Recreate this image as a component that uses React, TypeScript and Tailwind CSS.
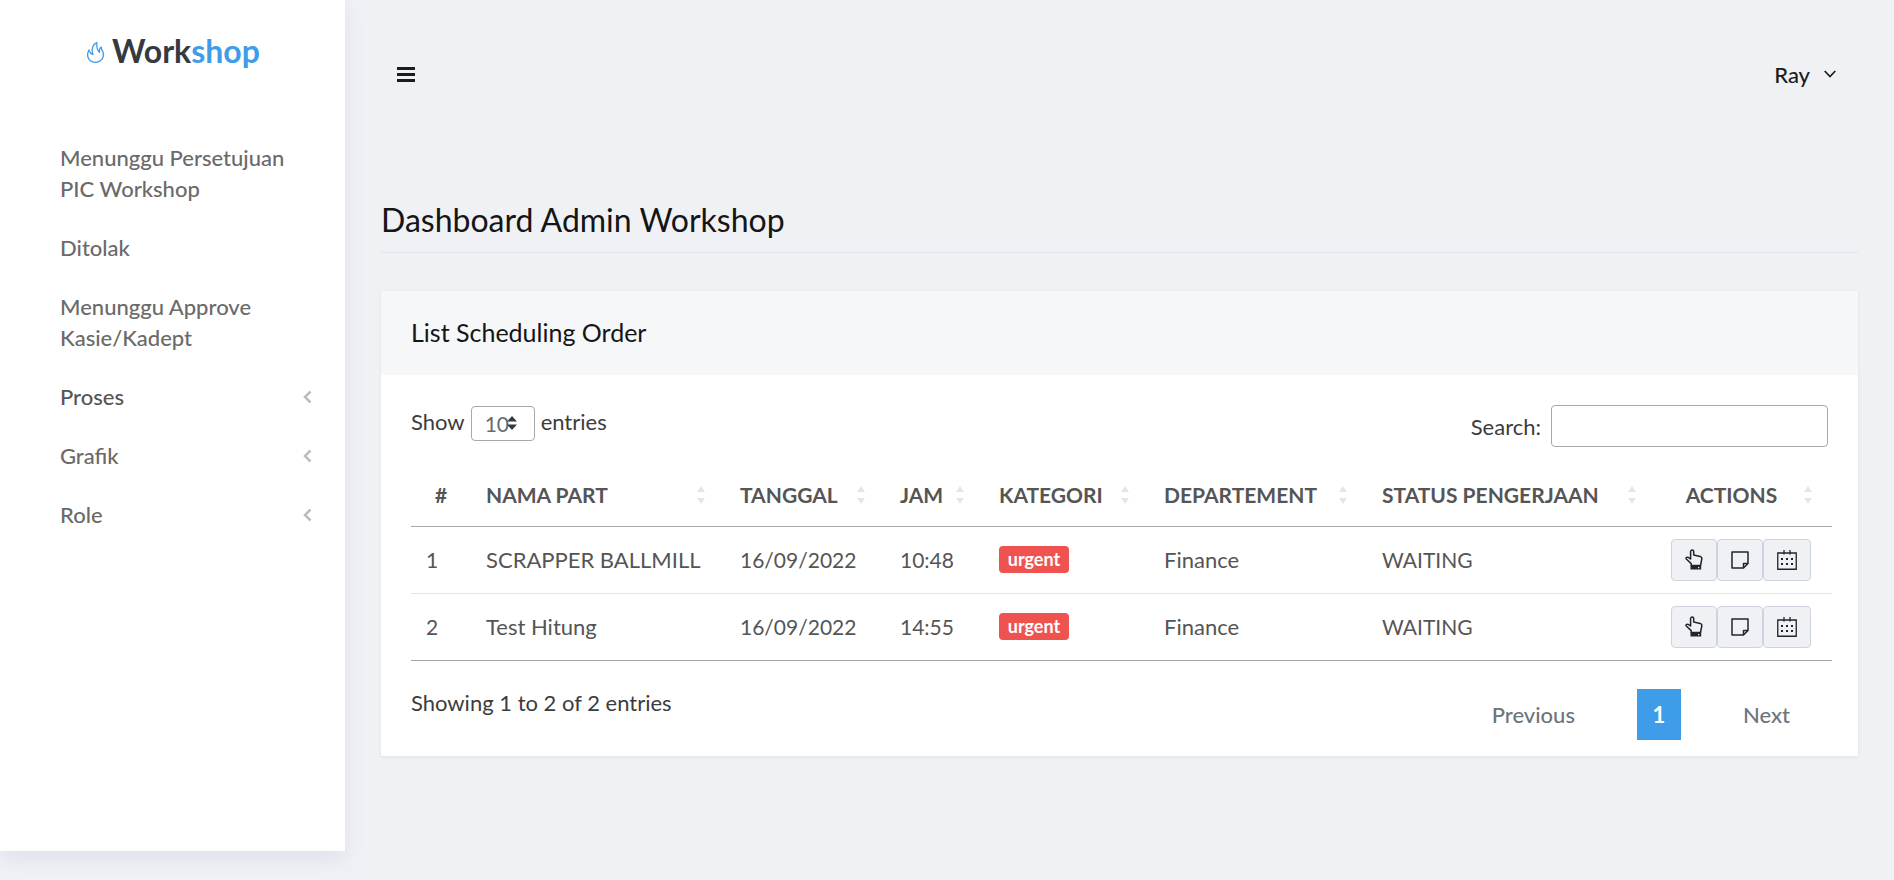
import type { ReactNode } from "react";
import { SlFire } from "react-icons/sl";

type NavItem = { label: string; expandable?: boolean; active?: boolean };

const navItems: NavItem[] = [
  { label: "Menunggu Persetujuan PIC Workshop" },
  { label: "Ditolak" },
  { label: "Menunggu Approve Kasie/Kadept" },
  { label: "Proses", expandable: true, active: true },
  { label: "Grafik", expandable: true },
  { label: "Role", expandable: true },
];

const columns = ["NAMA PART", "TANGGAL", "JAM", "KATEGORI", "DEPARTEMENT", "STATUS PENGERJAAN"];

const orders = [
  { id: 1, part: "SCRAPPER BALLMILL", date: "16/09/2022", time: "10:48", category: "urgent", department: "Finance", status: "WAITING" },
  { id: 2, part: "Test Hitung", date: "16/09/2022", time: "14:55", category: "urgent", department: "Finance", status: "WAITING" },
];

function SortIcon() {
  return (
    <svg aria-hidden="true" viewBox="0 0 8 20" className="h-5 w-2 shrink-0 fill-[#e6e6e6]">
      <path d="M4 1 8 7H0zM4 19 0 13h8z" />
    </svg>
  );
}

function HandIcon() {
  return (
    <svg aria-hidden="true" viewBox="0 0 18 21" className="h-[21px] w-[18px] shrink-0">
      <path
        d="M6.200 16.500V14.600L1.300 10C.5 8.800 1.800 7.700 3.200 8.400L5.600 10V2.600C5.600.6 8.700.6 8.700 2.600V6.100L15.200 7.400C16.700 7.800 17 8.800 16.800 10L15.500 16.500Z"
        fill="none"
        stroke="currentColor"
        strokeWidth="1.500"
        strokeLinejoin="round"
      />
      <path d="M5.500 16.200H16.200V20.500H5.500zM13 18v1.200h1.300V18z" fill="currentColor" fillRule="evenodd" />
    </svg>
  );
}

function NoteIcon() {
  return (
    <svg aria-hidden="true" viewBox="0 0 18 18" className="size-[18px] shrink-0 fill-none stroke-current">
      <path d="M1 1H17V12.500L12.500 17H1ZM17 12.500H12.500V17" strokeWidth="1.500" strokeLinejoin="round" />
    </svg>
  );
}

function CalendarIcon() {
  return (
    <svg aria-hidden="true" viewBox="0 0 20 20" className="size-5 shrink-0">
      <path d="M.75 3H19.250V19.250H.75ZM7 0V4.500M13 0V4.500" fill="none" stroke="currentColor" strokeWidth="1.300" />
      <path d="M4 8h2v2H4zM9 8h2v2H9zM14 8h2v2h-2zM4 13h2v2H4zM9 13h2v2H9zM14 13h2v2h-2z" fill="currentColor" />
    </svg>
  );
}

function HeaderCell({ label, center }: { label: string; center?: boolean }) {
  return (
    <th scope="col" className="h-[62px] px-[15px] text-left font-bold">
      <button type="button" className="flex w-full items-center justify-between pr-[5px]">
        <span className={center ? "flex-1 pr-3 text-center" : ""}>{label}</span>
        <SortIcon />
      </button>
    </th>
  );
}

function ActionButton({ label, children }: { label: string; children: ReactNode }) {
  return (
    <button
      type="button"
      aria-label={label}
      className="flex h-[42px] flex-auto items-center justify-center rounded border border-[#cdd4e0] bg-[#f0f1f5] text-[#212529]"
    >
      {children}
    </button>
  );
}

function Sidebar() {
  return (
    <aside className="min-h-[851px] w-[345px] shrink-0 bg-white shadow-[0_8px_20px_#dde1ea]">
      <a href="#" className="flex h-[101px] items-center justify-center text-[32px] font-bold text-[#343a40]">
        <SlFire className="mt-1 mr-1.5 size-[21px] text-[#3f9ce8]" />
        <span>
          Work<span className="text-[#3f9ce8]">shop</span>
        </span>
      </a>
      <nav className="flex flex-col gap-7 pt-[41px] pr-[33px] pl-[60px]">
        {navItems.map((item) => (
          <a
            key={item.label}
            href="#"
            className={`flex items-center justify-between leading-[31px] font-medium ${item.active ? "text-[#555555]" : "text-[#6a6a6a]"}`}
          >
            <span className="max-w-[240px]">{item.label}</span>
            {item.expandable && (
              <svg aria-hidden="true" viewBox="0 0 9 14" className="h-3.5 w-[9px] fill-none stroke-[#bdbdbd] stroke-[2.500]">
                <path d="M7.500 1.500 2 7l5.500 5.500" />
              </svg>
            )}
          </a>
        ))}
      </nav>
    </aside>
  );
}

export default function App() {
  return (
    <div className="flex min-h-screen items-start bg-[#f0f1f5] font-['Lato',sans-serif] text-[22px] text-[#3c3c3c]">
      <Sidebar />
      <main className="min-w-0 flex-1 px-9">
        <header className="flex h-[148px] items-center justify-between pr-[22px] pl-4 text-[#1c1c1c]">
          <button type="button" aria-label="Toggle menu">
            <svg aria-hidden="true" viewBox="0 0 18 15" className="h-[15px] w-[18px] fill-current">
              <path d="M0 0h18v3H0zM0 6h18v3H0zM0 12h18v3H0z" />
            </svg>
          </button>
          <button type="button" className="flex items-center gap-[14px] font-medium">
            Ray
            <svg aria-hidden="true" viewBox="0 0 12 8" className="h-2 w-3 fill-none stroke-current stroke-[1.700]">
              <path d="M.7 1 6 6.500 11.300 1" />
            </svg>
          </button>
        </header>

        <h1 className="mt-[49px] border-b border-[#e3e5ea] pb-2.5 text-[32px] leading-[45px] text-[#151515]">
          Dashboard Admin Workshop
        </h1>

        <section className="mt-[38px] bg-white shadow-[0_1px_3px_#dfe2eb]">
          <h2 className="flex h-[84px] items-center bg-[#f6f7f9] px-[30px] text-[25px] text-[#151515]">
            List Scheduling Order
          </h2>
          <div className="pt-[30px] pr-[26px] pb-4 pl-[30px]">
            <div className="flex items-start justify-between pr-1">
              <div className="flex items-center">
                <label htmlFor="page-size" className="pb-1">Show</label>
                <div className="relative mx-1.5">
                  <select
                    id="page-size"
                    defaultValue="10"
                    className="h-[35px] w-16 appearance-none rounded border border-[#a8a8a8] bg-white pl-[13px] text-[21px] text-[#6a6a6a]"
                  >
                    <option>10</option>
                    <option>25</option>
                    <option>50</option>
                    <option>100</option>
                  </select>
                  <svg aria-hidden="true" viewBox="0 0 10 14" className="pointer-events-none absolute top-2.5 left-9 h-3.5 w-2.5 fill-[#343a40]">
                    <path d="M5 0 10 5.500H0zM5 14 0 8.500h10z" />
                  </svg>
                </div>
                <label htmlFor="page-size" className="pb-1">entries</label>
              </div>
              <div className="flex items-center gap-2.5">
                <label htmlFor="search">Search:</label>
                <input id="search" type="search" className="h-[42px] w-[277px] rounded border border-[#a8a8a8] bg-white px-3" />
              </div>
            </div>

            <table className="mt-[17px] w-full table-fixed border-collapse border-b border-[#a8a8a8] text-[21px] text-[#555555]">
              <colgroup>
                <col className="w-[60px]" />
                <col className="w-[254px]" />
                <col className="w-[160px]" />
                <col className="w-[99px]" />
                <col className="w-[165px]" />
                <col className="w-[218px]" />
                <col className="w-[289px]" />
                <col className="w-[176px]" />
              </colgroup>
              <thead>
                <tr className="border-b border-[#a8a8a8]">
                  <th scope="col" className="px-[15px] text-center font-bold">#</th>
                  {columns.map((c) => (
                    <HeaderCell key={c} label={c} />
                  ))}
                  <HeaderCell label="ACTIONS" center />
                </tr>
              </thead>
              <tbody>
                {orders.map((o) => (
                  <tr key={o.id} className="h-[67px] border-t border-[#e2e5ee] first:border-t-0">
                    <td className="px-[15px]">{o.id}</td>
                    <td className="px-[15px] text-[22px] whitespace-nowrap">{o.part}</td>
                    <td className="px-[15px]">{o.date}</td>
                    <td className="px-[15px]">{o.time}</td>
                    <td className="px-[15px]">
                      <span className="flex h-[27px] w-[70px] items-center justify-center rounded bg-[#ef5350] pb-px text-lg font-bold text-white">
                        {o.category}
                      </span>
                    </td>
                    <td className="px-[15px] text-[22px]">{o.department}</td>
                    <td className="px-[15px]">{o.status}</td>
                    <td className="pr-[21px] pl-[15px]">
                      <div className="flex">
                        <ActionButton label="Select order"><HandIcon /></ActionButton>
                        <ActionButton label="Order notes"><NoteIcon /></ActionButton>
                        <ActionButton label="Schedule order"><CalendarIcon /></ActionButton>
                      </div>
                    </td>
                  </tr>
                ))}
              </tbody>
            </table>

            <div className="mt-7 flex items-start justify-between">
              <p className="leading-7">Showing 1 to 2 of 2 entries</p>
              <nav aria-label="Table pages" className="flex h-[51px] items-center pr-[42px] font-medium text-[#6c757d]">
                <button type="button">Previous</button>
                <button type="button" aria-current="page" className="mx-[62px] h-full w-11 bg-[#3f9ce8] font-bold text-white">
                  1
                </button>
                <button type="button">Next</button>
              </nav>
            </div>
          </div>
        </section>
      </main>
    </div>
  );
}
